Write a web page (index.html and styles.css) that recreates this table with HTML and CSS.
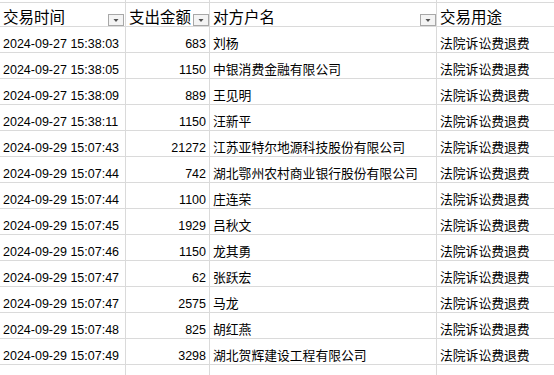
FILE: index.html
```html
<!DOCTYPE html>
<html lang="zh-CN">
<head>
<meta charset="utf-8">
<title>交易明细</title>
<link rel="stylesheet" href="styles.css">
</head>
<body>
<div class="sheet">
  <div class="c"></div><div class="c"></div><div class="c"></div><div class="c"></div>

  <div class="c h"><span>交易时间</span><span class="fb fb-inset"><svg width="16" height="12" viewBox="0 0 16 12"><rect x="0.5" y="0.5" width="15" height="11" class="fb-box"/><path d="M5.5 5h5l-2.5 3z" class="fb-arrow"/></svg></span></div>
  <div class="c h"><span>支出金额</span><span class="fb"><svg width="16" height="12" viewBox="0 0 16 12"><rect x="0.5" y="0.5" width="15" height="11" class="fb-box"/><path d="M5.5 5h5l-2.5 3z" class="fb-arrow"/></svg></span></div>
  <div class="c h"><span>对方户名</span><span class="fb"><svg width="16" height="12" viewBox="0 0 16 12"><rect x="0.5" y="0.5" width="15" height="11" class="fb-box"/><path d="M5.5 5h5l-2.5 3z" class="fb-arrow"/></svg></span></div>
  <div class="c h"><span>交易用途</span></div>

  <div class="c">2024-09-27 15:38:03</div><div class="c n">683</div><div class="c z">刘杨</div><div class="c z">法院诉讼费退费</div>
  <div class="c">2024-09-27 15:38:05</div><div class="c n">1150</div><div class="c z">中银消费金融有限公司</div><div class="c z">法院诉讼费退费</div>
  <div class="c">2024-09-27 15:38:09</div><div class="c n">889</div><div class="c z">王见明</div><div class="c z">法院诉讼费退费</div>
  <div class="c">2024-09-27 15:38:11</div><div class="c n">1150</div><div class="c z">汪新平</div><div class="c z">法院诉讼费退费</div>
  <div class="c">2024-09-29 15:07:43</div><div class="c n">21272</div><div class="c z">江苏亚特尔地源科技股份有限公司</div><div class="c z">法院诉讼费退费</div>
  <div class="c">2024-09-29 15:07:44</div><div class="c n">742</div><div class="c z">湖北鄂州农村商业银行股份有限公司</div><div class="c z">法院诉讼费退费</div>
  <div class="c">2024-09-29 15:07:44</div><div class="c n">1100</div><div class="c z">庄连荣</div><div class="c z">法院诉讼费退费</div>
  <div class="c">2024-09-29 15:07:45</div><div class="c n">1929</div><div class="c z">吕秋文</div><div class="c z">法院诉讼费退费</div>
  <div class="c">2024-09-29 15:07:46</div><div class="c n">1150</div><div class="c z">龙其勇</div><div class="c z">法院诉讼费退费</div>
  <div class="c">2024-09-29 15:07:47</div><div class="c n">62</div><div class="c z">张跃宏</div><div class="c z">法院诉讼费退费</div>
  <div class="c">2024-09-29 15:07:47</div><div class="c n">2575</div><div class="c z">马龙</div><div class="c z">法院诉讼费退费</div>
  <div class="c">2024-09-29 15:07:48</div><div class="c n">825</div><div class="c z">胡红燕</div><div class="c z">法院诉讼费退费</div>
  <div class="c">2024-09-29 15:07:49</div><div class="c n">3298</div><div class="c z">湖北贺辉建设工程有限公司</div><div class="c z">法院诉讼费退费</div>

  <div class="c"></div><div class="c"></div><div class="c"></div><div class="c"></div>
</div>
</body>
</html>
```

FILE: styles.css
```css
html, body {
  margin: 0;
  padding: 0;
  background: #ffffff;
  overflow: hidden;
}

.sheet {
  display: grid;
  grid-template-columns: 125px 83px 226px 1fr;
  grid-template-rows: 2px 23px repeat(13, 25px) 20px;
  gap: 1px;
  background: #dadada;
  width: 554px;
  height: 375px;
  overflow: hidden;
  font-family: "Liberation Sans", "Noto Sans CJK SC", sans-serif;
  font-size: 12.5px;
  color: #000000;
}

.c {
  background: #ffffff;
  display: flex;
  align-items: flex-end;
  padding: 0 3px 0 3px;
  line-height: 16px;
  white-space: nowrap;
  overflow: hidden;
}

.n {
  justify-content: flex-end;
}

.z {
  font-size: 12.8px;
}

.h {
  font-family: "Noto Sans CJK SC", sans-serif;
  font-size: 15.5px;
  line-height: 20px;
  justify-content: space-between;
  padding-right: 0;
}

.fb {
  display: flex;
  align-self: flex-end;
  height: 12px;
}

.fb-inset {
  margin-right: 1px;
}

.fb-box {
  fill: #f4f4f4;
  stroke: #a8a8a8;
  stroke-width: 1;
}

.fb-arrow {
  fill: #505050;
}
```
